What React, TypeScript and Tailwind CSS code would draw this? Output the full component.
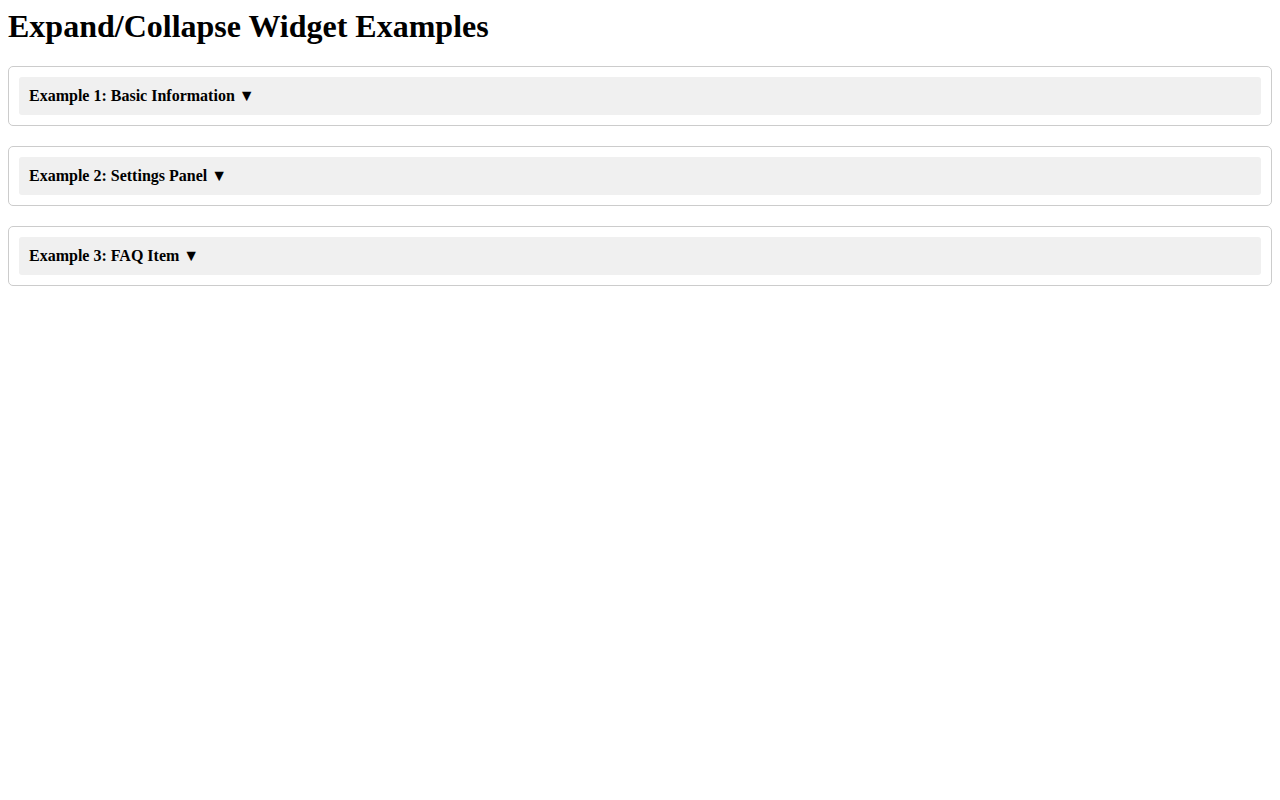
import { useState } from "react";

const ITEMS = [
  { id: 1, title: "Example 1: Basic Information", body: "Some basic information goes here." },
  { id: 2, title: "Example 2: Settings Panel", body: "Settings options go here." },
  { id: 3, title: "Example 3: FAQ Item", body: "The answer to the question goes here." },
];

function Collapsible({ title, body }: { title: string; body: string }) {
  const [open, setOpen] = useState(false);
  return (
    <div className="mb-5 rounded-[5px] border border-[#ccc] p-[10px]">
      <div
        onClick={() => setOpen(!open)}
        className="cursor-pointer rounded-[3px] bg-[#f0f0f0] p-[10px] text-[16px] leading-[18px] font-bold"
      >
        {title} {open ? "▲" : "▼"}
      </div>
      {open && <div className="p-[10px]">{body}</div>}
    </div>
  );
}

export default function App() {
  return (
    <div
      className="min-h-screen bg-white p-2 text-black"
      style={{ fontFamily: '"Liberation Serif", "Times New Roman", serif' }}
    >
      <h1 className="mb-[21px] text-[32px] leading-[37px] font-bold">
        Expand/Collapse Widget Examples
      </h1>
      {ITEMS.map((item) => (
        <Collapsible key={item.id} title={item.title} body={item.body} />
      ))}
    </div>
  );
}
